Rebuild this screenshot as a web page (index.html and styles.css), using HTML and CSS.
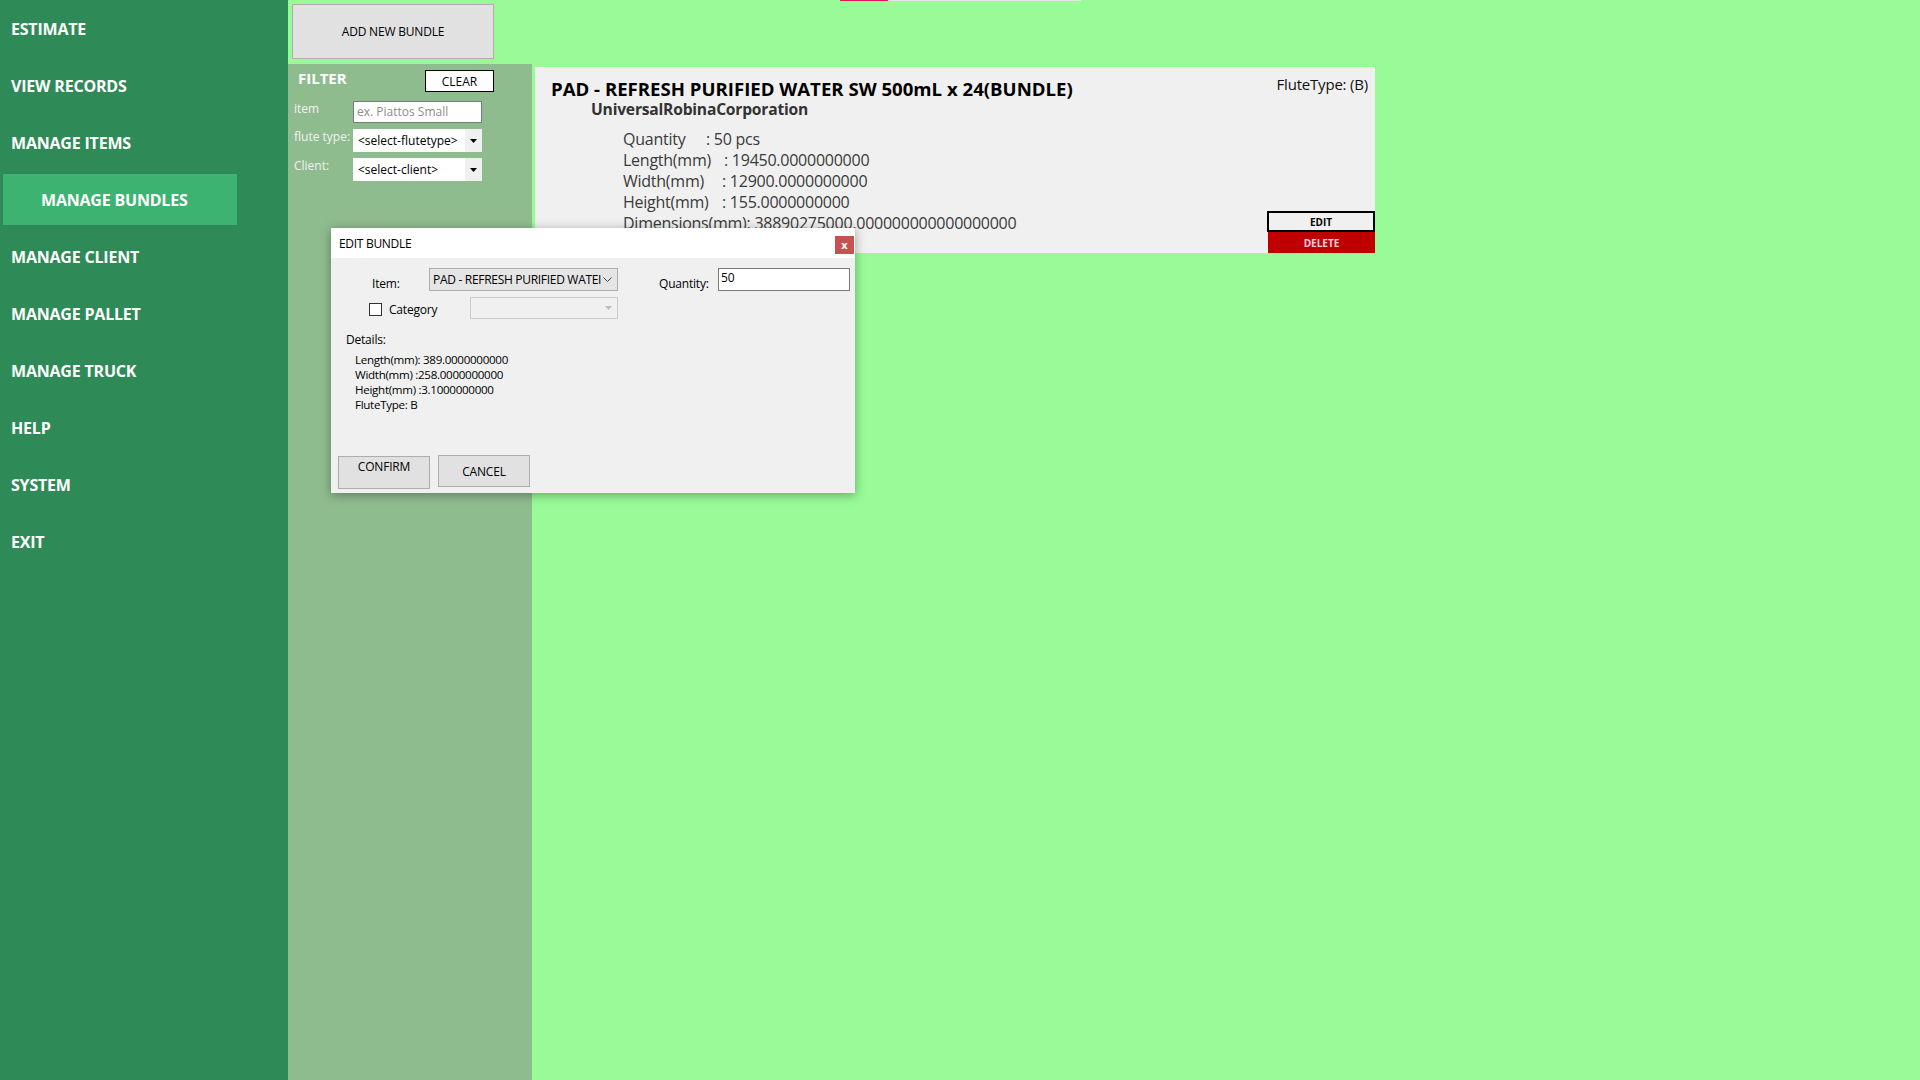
FILE: index.html
```html
<!DOCTYPE html>
<html>
<head>
<meta charset="utf-8">
<link rel="stylesheet" href="styles.css">
</head>
<body>
<aside class="sidebar">
  <div class="nav-item">ESTIMATE</div>
  <div class="nav-item">VIEW RECORDS</div>
  <div class="nav-item">MANAGE ITEMS</div>
  <div class="nav-item active"><span>MANAGE BUNDLES</span></div>
  <div class="nav-item">MANAGE CLIENT</div>
  <div class="nav-item">MANAGE PALLET</div>
  <div class="nav-item">MANAGE TRUCK</div>
  <div class="nav-item">HELP</div>
  <div class="nav-item">SYSTEM</div>
  <div class="nav-item">EXIT</div>
</aside>
<main class="main">
  <div class="progress"><div class="progress-fill"></div></div>
  <section class="left-col">
    <button class="add-btn">ADD NEW BUNDLE</button>
    <div class="filter-panel">
      <div class="filter-head">
        <span class="filter-title">FILTER</span>
        <button class="clear-btn">CLEAR</button>
      </div>
      <div class="filter-row">
        <label class="filter-label">item</label>
        <div class="f-input placeholder">ex. Piattos Small</div>
      </div>
      <div class="filter-row">
        <label class="filter-label">flute type:</label>
        <div class="f-select"><span class="f-val">&lt;select-flutetype&gt;</span><span class="f-drop"><svg width="7" height="4" viewBox="0 0 7 4"><path d="M0 0h7L3.5 4z" fill="#000"/></svg></span></div>
      </div>
      <div class="filter-row">
        <label class="filter-label">Client:</label>
        <div class="f-select"><span class="f-val">&lt;select-client&gt;</span><span class="f-drop"><svg width="7" height="4" viewBox="0 0 7 4"><path d="M0 0h7L3.5 4z" fill="#000"/></svg></span></div>
      </div>
    </div>
  </section>
  <section class="content">
    <article class="card">
      <div class="card-body">
        <h1 class="card-title">PAD - REFRESH PURIFIED WATER SW 500mL x 24(BUNDLE)</h1>
        <div class="card-client">UniversalRobinaCorporation</div>
        <div class="card-details">
          <div class="d-row"><span class="lab lab-q">Quantity</span>: 50 pcs</div>
          <div class="d-row"><span class="lab lab-l">Length(mm)</span>: 19450.0000000000</div>
          <div class="d-row"><span class="lab lab-w">Width(mm)</span>: 12900.0000000000</div>
          <div class="d-row"><span class="lab lab-h">Height(mm)</span>: 155.0000000000</div>
          <div class="d-row">Dimensions(mm): 38890275000.000000000000000000</div>
        </div>
      </div>
      <div class="card-side">
        <div class="flute">FluteType: (B)</div>
        <div class="card-actions">
          <button class="edit-btn">EDIT</button>
          <button class="delete-btn">DELETE</button>
        </div>
      </div>
    </article>
  </section>

  <div class="dialog">
    <div class="dlg-titlebar">
      <span class="dlg-title">EDIT BUNDLE</span>
      <span class="dlg-close">x</span>
    </div>
    <div class="dlg-body">
      <div class="dlg-row1">
        <span class="dlg-label lab-item">Item:</span>
        <div class="combo-item"><span class="combo-text">PAD - REFRESH PURIFIED WATEI</span><svg class="chev" width="9" height="5" viewBox="0 0 9 5"><path d="M0.5 0.5L4.5 4.5L8.5 0.5" fill="none" stroke="#444" stroke-width="1"/></svg></div>
        <span class="dlg-label lab-qty">Quantity:</span>
        <div class="qty-input">50</div>
      </div>
      <div class="dlg-row2">
        <span class="checkbox"></span>
        <span class="dlg-label lab-cat">Category</span>
        <div class="combo-cat"><svg width="7" height="4" viewBox="0 0 7 4"><path d="M0 0h7L3.5 4z" fill="#bcbcbc"/></svg></div>
      </div>
      <div class="details-head">Details:</div>
      <div class="details-list">
        <div>Length(mm): 389.0000000000</div>
        <div>Width(mm) :258.0000000000</div>
        <div>Height(mm) :3.1000000000</div>
        <div>FluteType: B</div>
      </div>
      <div class="dlg-buttons">
        <button class="dlg-btn confirm">CONFIRM</button>
        <button class="dlg-btn cancel">CANCEL</button>
      </div>
    </div>
  </div>
</main>
</body>
</html>
```
FILE: styles.css
```css
* { box-sizing: border-box; }
html, body { margin: 0; padding: 0; }
body {
  width: 1920px;
  height: 1080px;
  display: flex;
  background: #98fb98;
  font-family: "Open Sans", "Noto Sans", sans-serif;
  overflow: hidden;
}
button { font-family: inherit; cursor: default; padding: 0; }

/* Sidebar */
.sidebar {
  width: 288px;
  flex: none;
  background: #2e8b57;
  display: flex;
  flex-direction: column;
}
.nav-item {
  height: 57px;
  display: flex;
  align-items: center;
  padding-left: 11px;
  color: #fff;
  font-weight: 700;
  font-size: 16px;
  letter-spacing: -0.2px;
}
.nav-item.active {
  margin: 3px 51px 3px 3px;
  height: 51px;
  padding-left: 38px;
  background: #3cb371;
}

/* Main */
.main {
  flex: 1;
  display: flex;
  position: relative;
  align-items: flex-start;
  height: 1080px;
}
.progress {
  position: absolute;
  left: 552px;
  top: 0;
  width: 241px;
  height: 1px;
  background: #e6e6e6;
}
.progress-fill { width: 48px; height: 1px; background: #e0115f; }

.left-col {
  width: 244px;
  height: 1080px;
  display: flex;
  flex-direction: column;
  padding-top: 4px;
}
.add-btn {
  margin-left: 4px;
  width: 202px;
  height: 55px;
  background: #e1e1e1;
  border: 1px solid #adadad;
  font-size: 12px;
  color: #000;
  letter-spacing: -0.2px;
}
.filter-panel {
  margin-top: 5px;
  flex: 1;
  background: #8fbc8f;
  padding: 6px 0 0 6px;
}
.filter-head {
  display: flex;
  align-items: flex-start;
  height: 31px;
}
.filter-title {
  margin-left: 4px;
  margin-top: -2px;
  color: #fff;
  font-weight: 700;
  font-size: 15px;
  width: 127px;
}
.clear-btn {
  width: 69px;
  height: 22px;
  background: #fff;
  border: 1px solid #000;
  font-size: 12px;
  color: #000;
}
.filter-row {
  display: flex;
  align-items: flex-start;
  height: 28px;
  margin-bottom: 1px;
}
.filter-row:nth-child(2) { height: 27px; }
.filter-label {
  width: 59px;
  color: #f2f2f2;
  font-size: 12px;
  line-height: 16px;
  margin-top: 0px;
}
.f-input {
  width: 129px;
  height: 22px;
  background: #fff;
  border: 1px solid #7a7a7a;
  font-size: 12px;
  line-height: 20px;
  padding-left: 3px;
}
.f-input.placeholder { color: #8c8c8c; }
.f-select {
  width: 129px;
  height: 23px;
  background: #fff;
  display: flex;
  align-items: center;
  font-size: 12px;
}
.f-val { flex: 1; padding-left: 5px; color: #000; }
.f-drop {
  width: 17px;
  height: 23px;
  background: #f0f0f0;
  display: flex;
  align-items: center;
  justify-content: center;
}

/* Content */
.content {
  padding: 3px 0 0 3px;
}
.card {
  margin-top: 64px;
  width: 840px;
  height: 186px;
  background: #f0f0f0;
  display: flex;
  overflow: hidden;
}
.card-body {
  flex: 1;
  padding: 11px 0 0 16px;
}
.card-title {
  margin: 0;
  font-size: 18.6px;
  font-weight: 700;
  color: #000;
  line-height: 22px;
}
.card-client {
  margin-left: 40px;
  font-size: 15.6px;
  font-weight: 700;
  color: #333;
  line-height: 18px;
  letter-spacing: -0.2px;
}
.card-details {
  margin-left: 72px;
  margin-top: 11px;
  font-size: 16px;
  color: #3a3a3a;
  line-height: 21px;
  letter-spacing: -0.25px;
  white-space: nowrap;
}
.lab { display: inline-block; }
.lab-q { width: 83px; }
.lab-l { width: 101px; }
.lab-w { width: 99px; }
.lab-h { width: 99px; }

.card-side {
  width: 240px;
  display: flex;
  flex-direction: column;
  align-items: flex-end;
  justify-content: space-between;
}
.flute {
  padding: 7px 7px 0 0;
  font-size: 15px;
  color: #111;
  letter-spacing: -0.2px;
}
.card-actions { display: flex; flex-direction: column; align-items: flex-end; }
.edit-btn {
  width: 108px;
  height: 21px;
  border: 2px solid #000;
  background: #f0f0f0;
  font-size: 10px;
  font-weight: 700;
  color: #000;
}
.delete-btn {
  width: 107px;
  height: 21px;
  border: none;
  background: #c00000;
  font-size: 10px;
  font-weight: 700;
  color: #ffd0e0;
}

/* Dialog */
.dialog {
  position: absolute;
  left: 43px;
  top: 228px;
  width: 524px;
  height: 265px;
  background: #f0f0f0;
  box-shadow: 0 2px 10px rgba(0,0,0,0.35);
  font-size: 12px;
  color: #000;
  display: flex;
  flex-direction: column;
}
.dlg-titlebar {
  height: 30px;
  background: #fff;
  display: flex;
  align-items: flex-start;
  justify-content: space-between;
  padding: 0 1px 0 8px;
}
.dlg-title { font-size: 12px; letter-spacing: -0.3px; margin-top: 7px; }
.dlg-close {
  width: 19px;
  height: 18px;
  margin-top: 8px;
  background: #c75050;
  color: #fff;
  font-size: 11px;
  font-weight: 700;
  display: flex;
  align-items: center;
  justify-content: center;
  line-height: 1;
  padding-bottom: 2px;
}
.dlg-body {
  flex: 1;
  padding-top: 10px;
  display: flex;
  flex-direction: column;
}
.dlg-row1 {
  display: flex;
  align-items: flex-start;
  height: 23px;
}
.dlg-label { font-size: 12px; letter-spacing: -0.2px; }
.lab-item { margin-left: 41px; width: 57px; margin-top: 7px; }
.combo-item {
  width: 189px;
  height: 23px;
  background: #e5e5e5;
  border: 1px solid #adadad;
  display: flex;
  align-items: center;
  padding: 0 5px 0 3px;
  overflow: hidden;
}
.combo-text { flex: 1; white-space: nowrap; overflow: hidden; font-size: 12px; letter-spacing: -0.3px; }
.chev { flex: none; margin-left: 2px; }
.lab-qty { margin-left: 41px; width: 59px; margin-top: 7px; }
.qty-input {
  width: 132px;
  height: 23px;
  background: #fff;
  border: 1px solid #7a7a7a;
  padding-left: 2px;
  line-height: 18px;
  font-size: 12px;
}
.dlg-row2 {
  margin-top: 7px;
  display: flex;
  align-items: center;
  height: 22px;
}
.checkbox {
  margin-left: 38px;
  width: 13px;
  height: 13px;
  border: 1px solid #333;
  background: #fff;
}
.lab-cat { margin-left: 7px; width: 81px; }
.combo-cat {
  width: 148px;
  height: 22px;
  margin-top: -2px;
  border: 1px solid #cccccc;
  background: #f0f0f0;
  display: flex;
  align-items: center;
  justify-content: flex-end;
  padding-right: 5px;
}
.details-head {
  margin: 12px 0 0 15px;
  line-height: 15px;
  letter-spacing: -0.2px;
}
.details-list {
  margin: 5px 0 0 24px;
  line-height: 15px;
  font-size: 11.6px;
  letter-spacing: -0.3px;
}
.dlg-buttons {
  margin-top: auto;
  margin-bottom: 4px;
  display: flex;
  align-items: flex-start;
  padding-left: 7px;
  gap: 8px;
}
.dlg-btn {
  width: 92px;
  background: #e1e1e1;
  border: 1px solid #adadad;
  font-size: 12px;
  color: #000;
  letter-spacing: -0.2px;
}
.dlg-btn.confirm { height: 33px; margin-top: 1px; padding-bottom: 12px; }
.dlg-btn.cancel { height: 32px; }
```
